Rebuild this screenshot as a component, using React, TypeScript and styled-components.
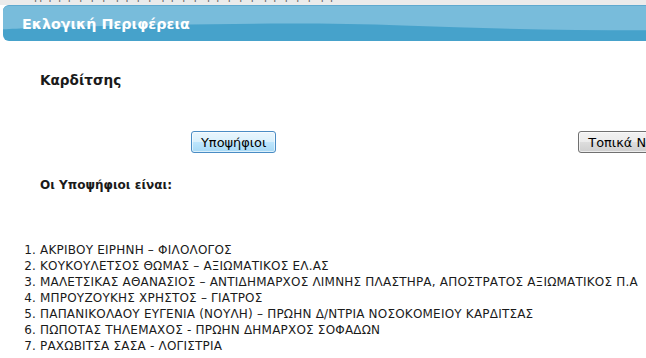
import React from "react";
import styled, { createGlobalStyle } from "styled-components";

const Global = createGlobalStyle`
  html, body { margin: 0; padding: 0; background: #ffffff; }
  body { font-family: "DejaVu Sans", Verdana, sans-serif; color: #1a1a1a; overflow: hidden; }
`;

const Page = styled.div`
  width: 646px;
  height: 358px;
  overflow: hidden;
  display: flex;
  flex-direction: column;
`;

const TopStrip = styled.div`
  height: 5px;
  overflow: hidden;
  background: #ebebeb;
  flex-shrink: 0;
`;

const StripText = styled.div`
  margin-top: -9px;
  padding-left: 30px;
  font-size: 11px;
  line-height: 12px;
  color: #6a6a6a;
  white-space: nowrap;
  letter-spacing: 0.5px;
`;

const Header = styled.div`
  position: relative;
  margin-left: 3px;
  height: 36px;
  border-radius: 6px 0 0 6px;
  overflow: hidden;
  background: #46a2cb;
  border-top: 1px solid #5fa9cf;
  box-sizing: border-box;
  display: flex;
  align-items: center;
  flex-shrink: 0;
`;

const Wave = styled.svg`
  position: absolute;
  inset: 0;
  width: 100%;
  height: 100%;
`;

const Title = styled.h1`
  position: relative;
  margin: 1px 0 0 19px;
  font-size: 14.3px;
  font-weight: bold;
  color: #ffffff;
`;

const Content = styled.div`
  padding: 30px 0 0 40px;
  display: flex;
  flex-direction: column;
`;

const Region = styled.h2`
  margin: 0;
  font-size: 13.6px;
  line-height: 18px;
  font-weight: bold;
`;

const ButtonRow = styled.div`
  display: flex;
  margin-top: 42px;
  padding-left: 151px;
  gap: 302px;
`;

const Btn = styled.button<{ $active?: boolean }>`
  flex-shrink: 0;
  height: 22px;
  padding: 0 9px;
  font-family: "DejaVu Sans", Verdana, sans-serif;
  font-size: 12.9px;
  color: #000;
  border-radius: 3px;
  border: 1px solid ${(p) => (p.$active ? "#4a8cc4" : "#707070")};
  background: ${(p) =>
    p.$active
      ? "linear-gradient(#eaf6fd 0%, #d9f0fc 50%, #bee6fd 50%, #a7d9f5 100%)"
      : "linear-gradient(#f2f2f2 0%, #ebebeb 50%, #dddddd 50%, #cfcfcf 100%)"};
  box-shadow: inset 0 0 0 1px rgba(255,255,255,0.6);
  white-space: nowrap;
`;

const Subtitle = styled.h3`
  margin: 25px 0 0 0;
  font-size: 12px;
  line-height: 14px;
  font-weight: bold;
`;

const List = styled.ol`
  margin: 50px 0 0 -18px;
  padding: 0 0 0 18px;
  font-size: 12px;
  letter-spacing: 0.2px;
  line-height: 16px;
  list-style-position: outside;
  white-space: nowrap;
`;

const Item = styled.li`
  padding-left: 0;
`;

const candidates = [
  "ΑΚΡΙΒΟΥ ΕΙΡΗΝΗ – ΦΙΛΟΛΟΓΟΣ",
  "ΚΟΥΚΟΥΛΕΤΣΟΣ ΘΩΜΑΣ – ΑΞΙΩΜΑΤΙΚΟΣ ΕΛ.ΑΣ",
  "ΜΑΛΕΤΣΙΚΑΣ ΑΘΑΝΑΣΙΟΣ – ΑΝΤΙΔΗΜΑΡΧΟΣ ΛΙΜΝΗΣ ΠΛΑΣΤΗΡΑ, ΑΠΟΣΤΡΑΤΟΣ ΑΞΙΩΜΑΤΙΚΟΣ Π.Α",
  "ΜΠΡΟΥΖΟΥΚΗΣ ΧΡΗΣΤΟΣ – ΓΙΑΤΡΟΣ",
  "ΠΑΠΑΝΙΚΟΛΑΟΥ ΕΥΓΕΝΙΑ (ΝΟΥΛΗ) – ΠΡΩΗΝ Δ/ΝΤΡΙΑ ΝΟΣΟΚΟΜΕΙΟΥ ΚΑΡΔΙΤΣΑΣ",
  "ΠΩΠΟΤΑΣ ΤΗΛΕΜΑΧΟΣ - ΠΡΩΗΝ ΔΗΜΑΡΧΟΣ ΣΟΦΑΔΩΝ",
  "ΡΑΧΩΒΙΤΣΑ ΣΑΣΑ - ΛΟΓΙΣΤΡΙΑ",
];

export default function App() {
  return (
    <>
      <Global />
      <Page>
        <TopStrip>
          <StripText>
            ηγ ρφ ρ ρ ρ ρ φ ρ ρ ρ γ ρ ρ ρ γ ρ ρ ρ ρ γ ρ ρ ρ ρ γ ρ
          </StripText>
        </TopStrip>
        <Header>
          <Wave viewBox="0 0 643 36" preserveAspectRatio="none">
            <path
              d="M0 0 H643 V25 C560 25 480 23 400 20 C300 16 180 19 80 21 C40 22 15 23 0 24 Z"
              fill="#78bcdb"
            />
          </Wave>
          <Title>Εκλογική Περιφέρεια</Title>
        </Header>
        <Content>
          <Region>Καρδίτσης</Region>
          <ButtonRow>
            <Btn $active>Υποψήφιοι</Btn>
            <Btn>Τοπικά Νέα</Btn>
          </ButtonRow>
          <Subtitle>Οι Υποψήφιοι είναι:</Subtitle>
          <List>
            {candidates.map((c) => (
              <Item key={c}>{c}</Item>
            ))}
          </List>
        </Content>
      </Page>
    </>
  );
}
